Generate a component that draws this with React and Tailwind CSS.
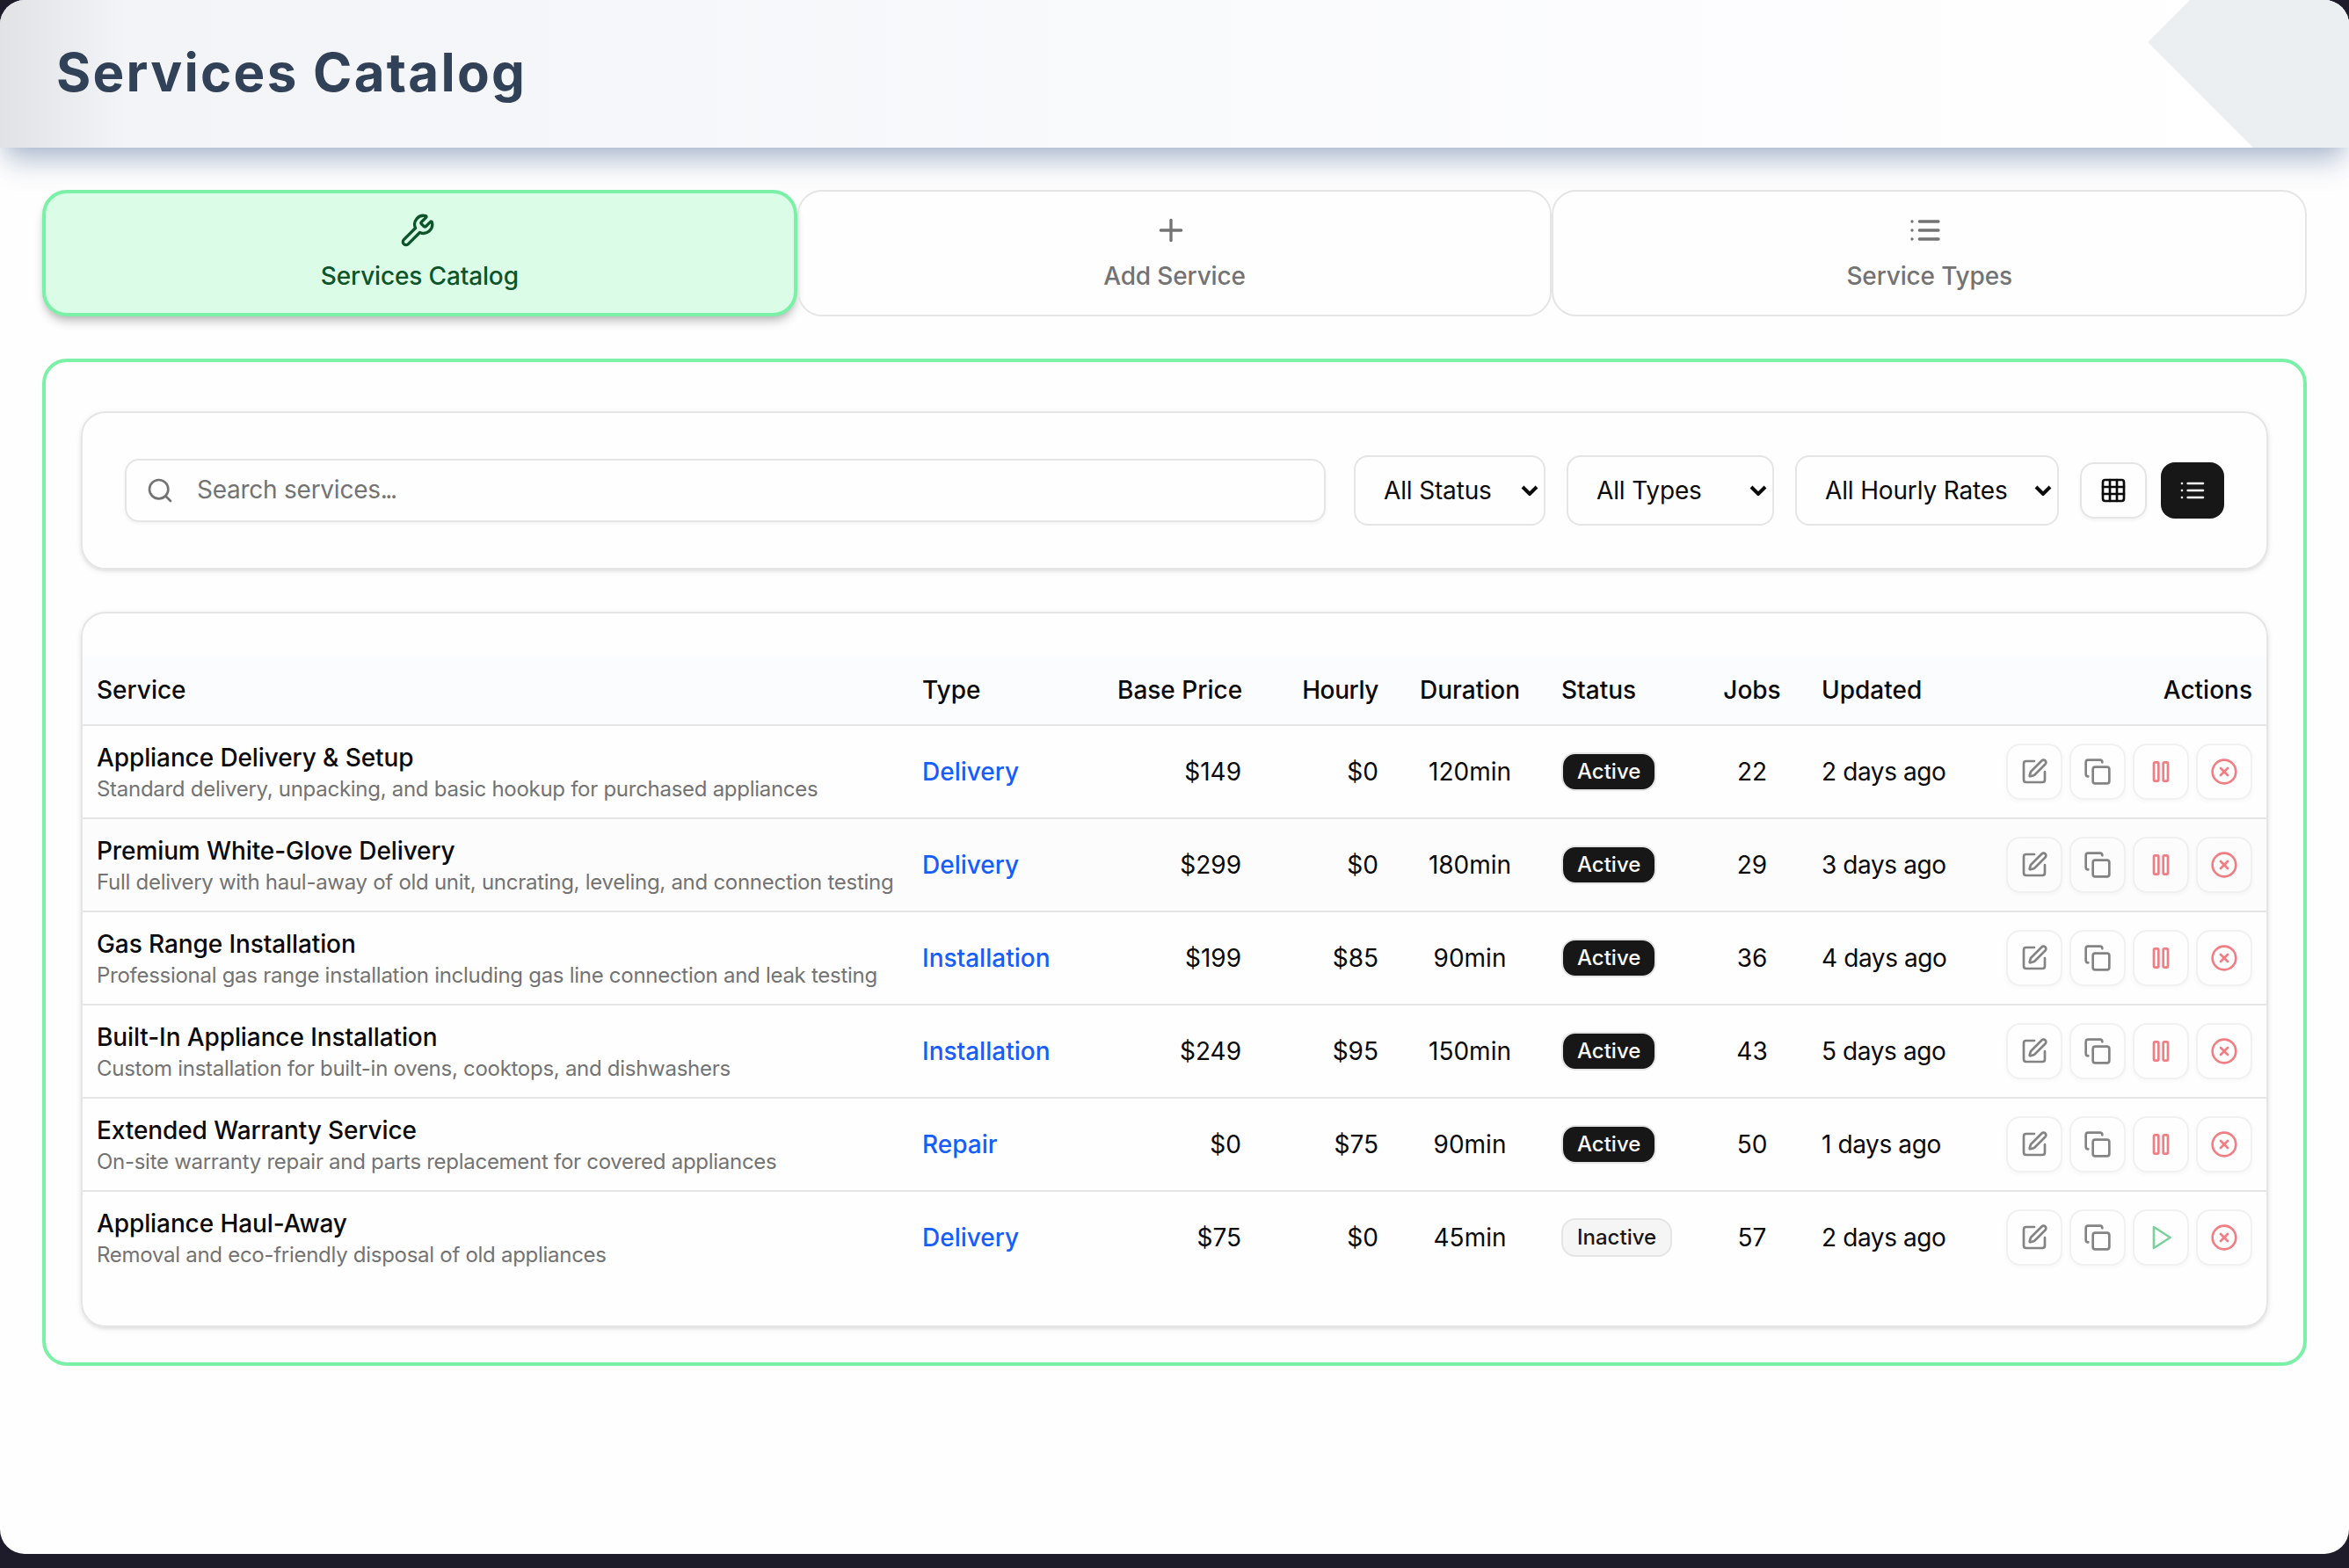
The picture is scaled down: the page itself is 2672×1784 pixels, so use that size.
import React from 'react';
import { Plus, Search, Wrench, Grid3x3, SquarePen, Copy, CircleX } from 'lucide-react';

const ListIcon = ({ className }) => (
    <svg viewBox="0 0 24 24" fill="none" stroke="currentColor" strokeWidth="2" strokeLinecap="round" strokeLinejoin="round" className={className}>
        <path d="M8 6h13M8 12h13M8 18h13M3 6h.01M3 12h.01M3 18h.01" />
    </svg>
);

const PauseIcon = ({ className }) => (
    <svg viewBox="0 0 24 24" fill="none" stroke="currentColor" strokeWidth="2" strokeLinecap="round" strokeLinejoin="round" className={className}>
        <rect x="14" y="4" width="4" height="16" rx="1" />
        <rect x="6" y="4" width="4" height="16" rx="1" />
    </svg>
);

const PlayIcon = ({ className }) => (
    <svg viewBox="0 0 24 24" fill="none" stroke="currentColor" strokeWidth="2" strokeLinecap="round" strokeLinejoin="round" className={className}>
        <polygon points="6 3 20 12 6 21 6 3" />
    </svg>
);

const services = [
    {
        id: 1,
        name: 'Appliance Delivery & Setup',
        description: 'Standard delivery, unpacking, and basic hookup for purchased appliances',
        type: 'Delivery',
        basePrice: 149,
        hourly: 0,
        duration: 120,
        status: 'Active',
        jobs: 22,
        updated: '2 days ago',
    },
    {
        id: 2,
        name: 'Premium White-Glove Delivery',
        description: 'Full delivery with haul-away of old unit, uncrating, leveling, and connection testing',
        type: 'Delivery',
        basePrice: 299,
        hourly: 0,
        duration: 180,
        status: 'Active',
        jobs: 29,
        updated: '3 days ago',
    },
    {
        id: 3,
        name: 'Gas Range Installation',
        description: 'Professional gas range installation including gas line connection and leak testing',
        type: 'Installation',
        basePrice: 199,
        hourly: 85,
        duration: 90,
        status: 'Active',
        jobs: 36,
        updated: '4 days ago',
    },
    {
        id: 4,
        name: 'Built-In Appliance Installation',
        description: 'Custom installation for built-in ovens, cooktops, and dishwashers',
        type: 'Installation',
        basePrice: 249,
        hourly: 95,
        duration: 150,
        status: 'Active',
        jobs: 43,
        updated: '5 days ago',
    },
    {
        id: 5,
        name: 'Extended Warranty Service',
        description: 'On-site warranty repair and parts replacement for covered appliances',
        type: 'Repair',
        basePrice: 0,
        hourly: 75,
        duration: 90,
        status: 'Active',
        jobs: 50,
        updated: '1 days ago',
    },
    {
        id: 6,
        name: 'Appliance Haul-Away',
        description: 'Removal and eco-friendly disposal of old appliances',
        type: 'Delivery',
        basePrice: 75,
        hourly: 0,
        duration: 45,
        status: 'Inactive',
        jobs: 57,
        updated: '2 days ago',
    },
];

const tabs = [
    { id: 'catalog', label: 'Services Catalog', icon: Wrench, iconClass: 'mr-1 size-10' },
    { id: 'add', label: 'Add Service', icon: Plus, iconClass: 'mr-2 size-10' },
    { id: 'types', label: 'Service Types', icon: ListIcon, iconClass: 'mr-2.5 size-10' },
];

const filters = [
    { label: 'All Status', width: 'w-[218px]' },
    { label: 'All Types', width: 'w-[236px]' },
    { label: 'All Hourly Rates', width: 'w-[300px]' },
];

const Filter = ({ label, width }) => (
    <button className={`flex h-20 items-center justify-between rounded-2xl border-2 border-neutral-200 pr-1.5 pl-8 tracking-[-0.15px] whitespace-nowrap ${width}`}>
        {label}
        <svg viewBox="0 0 20 12" fill="none" stroke="currentColor" strokeWidth="4" className="h-3 w-5">
            <path d="M2 2l8 8 8-8" />
        </svg>
    </button>
);

const StatusBadge = ({ status }) => (
    <span
        className={`inline-flex h-11 items-center rounded-2xl border-2 border-neutral-200 px-4 align-middle text-2xl font-medium ${
            status === 'Active' ? 'bg-neutral-900 text-neutral-50' : 'bg-neutral-100 text-neutral-900'
        }`}
    >
        {status}
    </span>
);

const ActionButton = ({ icon: Icon, color }) => (
    <button
        className={`flex size-16 items-center justify-center rounded-2xl border-2 border-neutral-200 opacity-50 shadow-[0_2px_4px_rgba(0,0,0,0.05)] ${color}`}
    >
        <Icon className="size-8" />
    </button>
);

export default function App() {
    return (
        <div className="h-[1784px] w-[2672px] bg-[#1e1c2a] font-['Inter',sans-serif] text-[28px] leading-10 text-neutral-950">
            <div className="h-[1768px] overflow-hidden rounded-[28px] bg-[#fefefe]">
                {/* Header */}
                <header className="relative h-[168px] shadow-[0_20px_30px_-6px_rgba(68,99,146,0.42),0_8px_12px_-8px_rgba(68,99,146,0.1)]">
                    <div className="relative flex h-full items-center overflow-hidden bg-linear-to-r from-[#f2f3f6] via-[#f9fafc] to-white px-16 pb-1">
                        <div className="absolute inset-y-0 left-0 w-36 bg-linear-to-r from-black/7 to-transparent" />
                        <div className="absolute -top-20 -right-20 size-64 rotate-45 bg-[#ebeff2]" />
                        <h1 className="relative text-[60px] font-bold tracking-[0.038em] text-slate-700">Services Catalog</h1>
                    </div>
                </header>

                <main className="flex flex-col gap-12 p-12">
                    {/* Tabs */}
                    <nav className="grid grid-cols-3">
                        {tabs.map(({ id, label, icon: Icon, iconClass }) => (
                            <button
                                key={id}
                                className={`flex h-36 flex-col items-center justify-center gap-3 rounded-[28px] font-medium tracking-[-0.15px] ${
                                    id === 'catalog'
                                        ? 'border-4 border-green-300 bg-green-100 text-green-900 shadow-[0_8px_12px_-2px_rgba(0,0,0,0.2),0_4px_8px_-4px_rgba(0,0,0,0.18)]'
                                        : 'border-2 border-neutral-200 text-neutral-500'
                                }`}
                            >
                                <Icon className={iconClass} />
                                <span>{label}</span>
                            </button>
                        ))}
                    </nav>

                    <section className="flex flex-col gap-12 rounded-[28px] border-4 border-green-300 px-10 pt-14 pb-10">
                        {/* Search and filters */}
                        <div className="flex items-center rounded-[28px] border-2 border-neutral-200 p-12 shadow-[0_2px_6px_rgba(0,0,0,0.1),0_2px_4px_-2px_rgba(0,0,0,0.1)]">
                            <div className="mr-8 flex h-[72px] flex-1 items-center gap-[26px] rounded-2xl border-2 border-neutral-200 px-[22px] text-neutral-500 shadow-[0_2px_4px_rgba(0,0,0,0.05)]">
                                <Search className="size-8" />
                                <span className="pb-[3px] tracking-[-0.25px]">
                                    Search services<span className="tracking-[-2.5px]">...</span>
                                </span>
                            </div>
                            <div className="flex items-center gap-6">
                                {filters.map((filter) => (
                                    <Filter key={filter.label} {...filter} />
                                ))}
                                <div className="flex gap-4">
                                    <button className="flex h-16 w-[76px] items-center justify-center rounded-2xl border-2 border-neutral-200 shadow-[0_2px_4px_rgba(0,0,0,0.05)]">
                                        <Grid3x3 className="size-8" />
                                    </button>
                                    <button className="flex h-16 w-[72px] items-center justify-center rounded-2xl bg-neutral-900 text-neutral-50">
                                        <ListIcon className="size-8" />
                                    </button>
                                </div>
                            </div>
                        </div>

                        {/* Services table */}
                        <div className="rounded-[28px] border-2 border-neutral-200 py-12 shadow-[0_2px_6px_rgba(0,0,0,0.1),0_2px_4px_-2px_rgba(0,0,0,0.1)]">
                            <table className="w-full table-fixed border-separate border-spacing-0 whitespace-nowrap">
                                <colgroup>
                                    <col className="w-[939px]" />
                                    <col className="w-[222px]" />
                                    <col className="w-[173px]" />
                                    <col className="w-[156px]" />
                                    <col className="w-[176px]" />
                                    <col className="w-[170px]" />
                                    <col className="w-[126px]" />
                                    <col className="w-[210px]" />
                                    <col />
                                </colgroup>
                                <thead>
                                    <tr className="h-20 bg-[#fbfcfe] *:border-b-2 *:border-neutral-200 *:px-4 *:font-medium">
                                        <th className="text-left">Service</th>
                                        <th className="text-left">Type</th>
                                        <th className="text-right">Base Price</th>
                                        <th className="text-right tracking-[-0.4px]">Hourly</th>
                                        <th className="text-center">Duration</th>
                                        <th className="text-left">Status</th>
                                        <th className="text-center">Jobs</th>
                                        <th className="text-left">Updated</th>
                                        <th className="text-right">Actions</th>
                                    </tr>
                                </thead>
                                <tbody>
                                    {services.map((service) => (
                                        <tr
                                            key={service.id}
                                            className="h-[106px] *:border-b-2 *:border-neutral-200 *:px-4 last:h-[104px] last:*:border-b-0 nth-2:bg-[#fcfcfc]"
                                        >
                                            <td>
                                                <div className="font-medium tracking-[-0.1px]">{service.name}</div>
                                                <div className="text-2xl tracking-[-0.28px] text-neutral-500">{service.description}</div>
                                            </td>
                                            <td className="font-medium text-blue-600">{service.type}</td>
                                            <td className="text-right">${service.basePrice}</td>
                                            <td className="text-right">${service.hourly}</td>
                                            <td className="text-center">{service.duration}min</td>
                                            <td>
                                                <StatusBadge status={service.status} />
                                            </td>
                                            <td className="text-center">{service.jobs}</td>
                                            <td className="tracking-[-0.4px]">{service.updated}</td>
                                            <td>
                                                <div className="flex justify-end gap-2">
                                                    <ActionButton icon={SquarePen} color="text-neutral-950" />
                                                    <ActionButton icon={Copy} color="text-neutral-950" />
                                                    {service.status === 'Active' ? (
                                                        <ActionButton icon={PauseIcon} color="text-red-600" />
                                                    ) : (
                                                        <ActionButton icon={PlayIcon} color="text-green-600" />
                                                    )}
                                                    <ActionButton icon={CircleX} color="text-red-600" />
                                                </div>
                                            </td>
                                        </tr>
                                    ))}
                                </tbody>
                            </table>
                        </div>
                    </section>
                </main>
            </div>
        </div>
    );
}
